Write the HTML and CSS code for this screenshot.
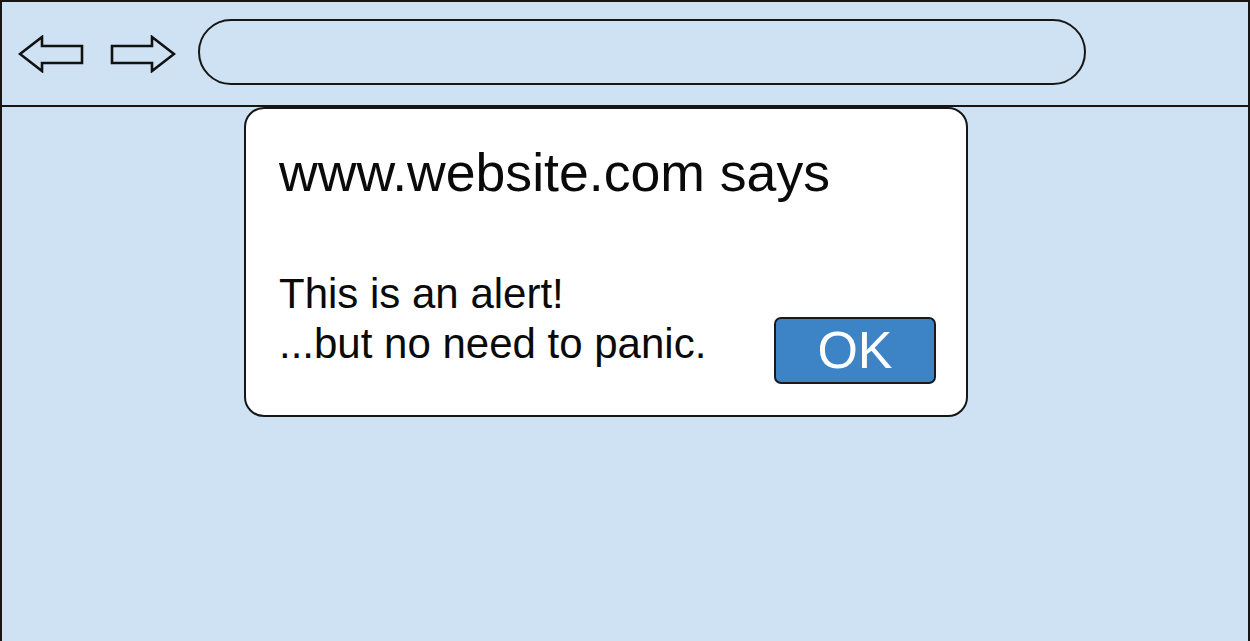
FILE: index.html
```html
<!DOCTYPE html>
<html lang="en">
<head>
    <meta charset="UTF-8">
    <title>Alert mockup</title>
    <link rel="stylesheet" href="styles.css">
</head>
<body>
    <div class="frame">
        <div class="toolbar">
            <svg class="arrow" width="66" height="38" viewBox="0 0 66 38">
                <polygon points="2,19 24,2 24,11 64,11 64,28 24,28 24,36" />
            </svg>
            <svg class="arrow fwd" width="66" height="38" viewBox="0 0 66 38">
                <polygon points="64,19 42,2 42,11 2,11 2,28 42,28 42,36" />
            </svg>
            <div class="address"></div>
        </div>

        <div class="content">
            <div class="dialog">
                <div class="title">www.website.com says</div>
                <div class="row">
                    <div class="message">This is an alert!<br>...but no need to panic.</div>
                    <div class="ok">OK</div>
                </div>
            </div>
        </div>
    </div>
</body>
</html>
```

FILE: styles.css
```css
html, body {
    margin: 0;
    padding: 0;
    overflow: hidden;
}
body {
    font-family: "Liberation Sans", Arial, sans-serif;
    color: #0a0a0a;
    background: #cfe2f3;
}
.frame {
    height: calc(100vh + 20px);
    border: 2px solid #161616;
    background: #cfe2f3;
}
.toolbar {
    display: flex;
    align-items: center;
    height: 103px;
    padding-left: 16px;
    border-bottom: 2px solid #161616;
}
.arrow polygon {
    fill: none;
    stroke: #111;
    stroke-width: 2.6;
    stroke-linejoin: miter;
}
.arrow.fwd {
    margin-left: 26px;
}
.address {
    margin-left: 22px;
    width: 884px;
    height: 62px;
    border: 2px solid #161616;
    border-radius: 33px;
    margin-top: -3px;
}
.content {
    padding-left: 242px;
}
.dialog {
    width: 720px;
    height: 306px;
    box-sizing: content-box;
    border: 2px solid #161616;
    border-radius: 20px;
    background: #fff;
}
.title {
    font-size: 53.6px;
    line-height: 61px;
    padding: 33px 0 0 33px;
}
.row {
    display: flex;
    justify-content: space-between;
    align-items: flex-end;
    margin-top: 66px;
    padding: 0 30px 0 33px;
}
.message {
    font-size: 42px;
    line-height: 50.4px;
    padding-bottom: 14px;
}
.ok {
    display: flex;
    align-items: center;
    justify-content: center;
    width: 158px;
    height: 63px;
    border: 2px solid #1a1a1a;
    border-radius: 7px;
    background: #3d84c6;
    color: #fff;
    font-size: 52px;
}
```
